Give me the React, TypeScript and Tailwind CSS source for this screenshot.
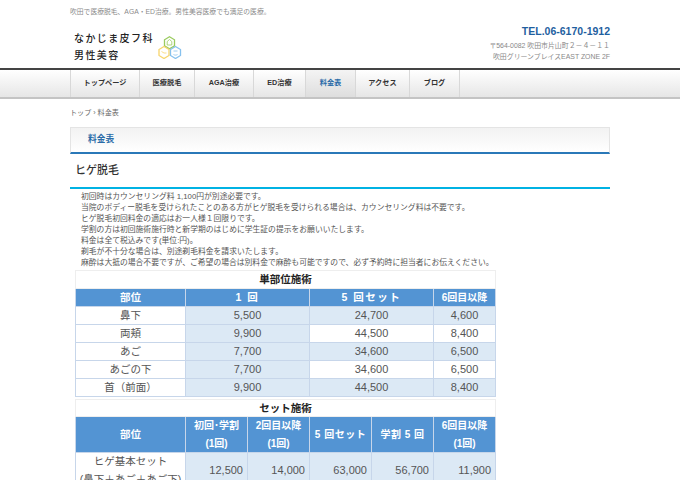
const font = { fontFamily: '"Liberation Sans", "Noto Sans CJK JP", sans-serif' };

const navItems = [
  { label: "トップページ", width: "w-[69px]" },
  { label: "医療脱毛", width: "w-[55px]" },
  { label: "AGA治療", width: "w-[59px]" },
  { label: "ED治療", width: "w-[52px]" },
  { label: "料金表", width: "w-[50px]", active: true },
  { label: "アクセス", width: "w-[54px]" },
  { label: "ブログ", width: "w-[50px]" },
];

const notes = [
  "初回時はカウンセリング料 1,100円が別途必要です。",
  "当院のボディー脱毛を受けられたことのある方がヒゲ脱毛を受けられる場合は、カウンセリング料は不要です。",
  "ヒゲ脱毛初回料金の適応はお一人様１回限りです。",
  "学割の方は初回施術施行時と新学期のはじめに学生証の提示をお願いいたします。",
  "料金は全て税込みです(単位:円)。",
  "剃毛が不十分な場合は、別途剃毛料金を請求いたします。",
  "麻酔は大抵の場合不要ですが、ご希望の場合は別料金で麻酔も可能ですので、必ず予約時に担当者にお伝えください。",
];

const singleRows = [
  ["鼻下", "5,500", "24,700", "4,600"],
  ["両頬", "9,900", "44,500", "8,400"],
  ["あご", "7,700", "34,600", "6,500"],
  ["あごの下", "7,700", "34,600", "6,500"],
  ["首（前面）", "9,900", "44,500", "8,400"],
];

function Logo() {
  return (
    <svg width="24" height="23" viewBox="0 0 24 23" fill="none" strokeWidth="1.3">
      <path d="M11.500 0.800l5 3v6l-5 3-5-3v-6z" stroke="#9acb5f" />
      <path d="M11.500 3.500l2.300 2v3.500h-4.600V5.500z" stroke="#9acb5f" strokeWidth="0.8" />
      <path d="M6 10.500l5 3v6l-5 3-5-3v-6z" stroke="#f7d56c" />
      <path d="M3.500 15.500l2.500 1.500h2.500" stroke="#f7d56c" strokeWidth="0.8" />
      <path d="M17.500 10.500l5 3v6l-5 3-5-3v-6z" stroke="#86c1ee" />
      <path d="M15.500 15h4M15.500 18.500c1.300.8 2.700.8 4 0" stroke="#86c1ee" strokeWidth="0.8" />
    </svg>
  );
}

function Header() {
  return (
    <header className="mx-auto flex h-[68px] w-[540px] justify-between">
      <div>
        <p className="pt-[7px] text-[6.800px] leading-[10px] text-[#8a8a8a]">吹田で医療脱毛、AGA・ED治療。男性美容医療でも満足の医療。</p>
        <div className="mt-[13px] flex items-center pl-[4px]">
          <div className="w-[84px] text-[10px] leading-[17px] font-medium tracking-[1.400px] text-[#222]">
            <div>なかじま皮フ科</div>
            <div>男性美容</div>
          </div>
          <Logo />
        </div>
      </div>
      <div className="pt-[24px] text-right">
        <p className="text-[10.500px] leading-[14px] font-bold text-[#1f5f9f]">TEL.06-6170-1912</p>
        <p className="mt-[2px] text-[6.900px] leading-[11px] text-[#888]">〒564-0082 吹田市片山町２－４－１１</p>
        <p className="text-[6.900px] leading-[11px] text-[#888]">吹田グリーンプレイスEAST ZONE 2F</p>
      </div>
    </header>
  );
}

function Nav() {
  return (
    <nav className="h-[31px] border-t-2 border-b-2 border-t-[#444] border-b-[#c4c4c4] bg-gradient-to-b from-white to-[#e6e6e6]">
      <ul className="mx-auto flex h-full w-[540px]">
        <li className="h-full w-0 border-l border-[#d8d8d8]" />
        {navItems.map((item) => (
          <li
            key={item.label}
            className={`flex h-full items-center justify-center border-r border-[#d8d8d8] text-[7.200px] font-bold ${item.width} ${
              item.active ? "bg-gradient-to-b from-[#f4f4f4] to-[#dedede] text-[#2a6ca8]" : "text-[#333]"
            }`}
          >
            {item.label}
          </li>
        ))}
      </ul>
    </nav>
  );
}

const th = "border border-[#c7d6ea] bg-[#5394d3] font-bold text-white";
const td = "border border-[#c7d6ea] text-center text-[#555]";
const num = "text-[11px]";

function SingleTable() {
  return (
    <table className="w-[420px] table-fixed border-collapse text-[10.500px] leading-[17px]">
      <colgroup>
        <col className="w-[110px]" />
        <col className="w-[124px]" />
        <col className="w-[124px]" />
        <col className="w-[62px]" />
      </colgroup>
      <tbody>
        <tr className="h-[18px]">
          <td colSpan={4} className="border border-[#eeeeee] text-center font-bold text-[#222]">単部位施術</td>
        </tr>
        <tr className="h-[18px] text-center">
          <th className={th}>部位</th>
          <th className={`${th} tracking-[1.500px]`}>1 回</th>
          <th className={`${th} tracking-[1.500px]`}>5 回セット</th>
          <th className={`${th} text-[10px]`}>6回目以降</th>
        </tr>
        {singleRows.map((row) => (
          <tr key={row[0]} className="h-[18px]">
            <td className={`${td} bg-white`}>{row[0]}</td>
            {row.slice(1).map((cell, i) => (
              <td key={i} className={`${td} ${num} ${i === 0 || !(row[0] === "両頬" || row[0] === "あごの下") ? "bg-[#dce9f5]" : "bg-white"}`}>
                {cell}
              </td>
            ))}
          </tr>
        ))}
      </tbody>
    </table>
  );
}

function SetTable() {
  return (
    <table className="mt-[2px] w-[420px] table-fixed border-collapse text-[10.500px] leading-[17.500px]">
      <colgroup>
        <col className="w-[110px]" />
        <col className="w-[62px]" />
        <col className="w-[62px]" />
        <col className="w-[62px]" />
        <col className="w-[62px]" />
        <col className="w-[62px]" />
      </colgroup>
      <tbody>
        <tr className="h-[17px]">
          <td colSpan={6} className="border border-[#eeeeee] text-center leading-[16px] font-bold text-[#222]">セット施術</td>
        </tr>
        <tr className="h-[36px] text-center">
          <th className={th}>部位</th>
          <th className={`${th} text-[10px]`}>初回･学割<br />(1回)</th>
          <th className={`${th} text-[10px]`}>2回目以降<br />(1回)</th>
          <th className={`${th} text-[10px] tracking-[0.5px]`}>5 回セット</th>
          <th className={`${th} text-[10px] tracking-[0.5px]`}>学割 5 回</th>
          <th className={`${th} text-[10px]`}>6回目以降<br />(1回)</th>
        </tr>
        <tr className="h-[36px]">
          <td className={`${td} bg-white`}>ヒゲ基本セット<br />(鼻下＋あご＋あご下)</td>
          {["12,500", "14,000", "63,000", "56,700", "11,900"].map((cell) => (
            <td key={cell} className={`${td} ${num} bg-[#dce9f5] pr-[4px] text-right`}>{cell}</td>
          ))}
        </tr>
      </tbody>
    </table>
  );
}

export default function App() {
  return (
    <div className="h-screen overflow-hidden bg-white" style={font}>
      <Header />
      <Nav />
      <main className="mx-auto w-[540px]">
        <p className="pt-[8px] text-[7.100px] leading-[12px] text-[#666]">トップ › 料金表</p>
        <h1 className="mt-[8px] flex h-[27px] items-center border border-b-2 border-[#e4e4e4] border-b-[#2a78b8] bg-gradient-to-b from-[#f2f2f2] to-white pl-[17px] text-[8.700px] font-bold text-[#2a6ca8]">料金表</h1>
        <h2 className="flex h-[35px] items-center border-b-[2px] border-[#00b2e3] pl-[5px] text-[11px] font-medium text-[#333]">ヒゲ脱毛</h2>
        <div className="pt-[2px] pb-[2px] pl-[11px] text-[7.800px] leading-[11px] whitespace-nowrap text-[#555]">
          {notes.map((note) => (
            <div key={note}>{note}</div>
          ))}
        </div>
        <div className="pl-[5px]">
          <SingleTable />
          <SetTable />
        </div>
      </main>
    </div>
  );
}
